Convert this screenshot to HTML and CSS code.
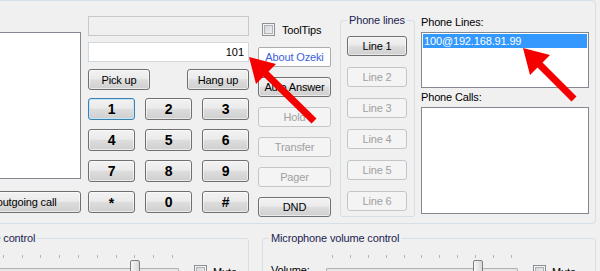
FILE: index.html
```html
<!DOCTYPE html>
<html lang="en">
<head>
    <meta charset="UTF-8">
    <meta name="viewport" content="width=device-width, initial-scale=1.0">
    <title>Ozeki Softphone</title>
    <link rel="stylesheet" href="styles.css">
</head>
<body>
    <div class="window">
        <div class="main-panel">
            <div class="col-log">
                <div class="listbox log-box"></div>
                <button class="btn call-btn">Make outgoing call</button>
            </div>

            <div class="col-dial">
                <input class="textbox" type="text" disabled>
                <input class="textbox number" type="text" value="101">
                <div class="call-row">
                    <button class="btn call-action">Pick up</button>
                    <button class="btn call-action">Hang up</button>
                </div>
                <div class="keypad">
                    <button class="btn key focused">1</button>
                    <button class="btn key">2</button>
                    <button class="btn key">3</button>
                    <button class="btn key">4</button>
                    <button class="btn key">5</button>
                    <button class="btn key">6</button>
                    <button class="btn key">7</button>
                    <button class="btn key">8</button>
                    <button class="btn key">9</button>
                    <button class="btn key star">*</button>
                    <button class="btn key">0</button>
                    <button class="btn key">#</button>
                </div>
            </div>

            <div class="col-actions">
                <label class="check tooltips"><span class="box"></span>ToolTips</label>
                <button class="btn link-btn">About Ozeki</button>
                <button class="btn">Auto Answer</button>
                <button class="btn" disabled>Hold</button>
                <button class="btn" disabled>Transfer</button>
                <button class="btn" disabled>Pager</button>
                <button class="btn">DND</button>
            </div>

            <fieldset class="group lines-group">
                <legend>Phone lines</legend>
                <button class="btn line">Line 1</button>
                <button class="btn line" disabled>Line 2</button>
                <button class="btn line" disabled>Line 3</button>
                <button class="btn line" disabled>Line 4</button>
                <button class="btn line" disabled>Line 5</button>
                <button class="btn line" disabled>Line 6</button>
            </fieldset>

            <div class="col-lists">
                <div class="caption">Phone Lines:</div>
                <div class="listbox lines-box">
                    <div class="item selected">100@192.168.91.99</div>
                </div>
                <div class="caption">Phone Calls:</div>
                <div class="listbox calls-box"></div>
            </div>
        </div>

        <div class="volume-row">
            <fieldset class="group volume-group speaker">
                <legend>Speaker volume control</legend>
                <div class="volume-body">
                    <span class="volume-label">Volume:</span>
                    <div class="slider">
                        <div class="ticks"><i></i><i></i><i></i><i></i><i></i><i></i><i></i><i></i><i></i><i></i><i></i></div>
                        <div class="track"></div>
                        <div class="thumb" style="left: 152px"></div>
                    </div>
                    <label class="check mute"><span class="box"></span>Mute</label>
                </div>
            </fieldset>

            <fieldset class="group volume-group mic">
                <legend>Microphone volume control</legend>
                <div class="volume-body">
                    <span class="volume-label">Volume:</span>
                    <div class="slider">
                        <div class="ticks"><i></i><i></i><i></i><i></i><i></i><i></i><i></i><i></i><i></i><i></i><i></i></div>
                        <div class="track"></div>
                        <div class="thumb" style="left: 147px"></div>
                    </div>
                    <label class="check mute"><span class="box"></span>Mute</label>
                </div>
            </fieldset>
        </div>

        <!-- callout arrows drawn over the screenshot -->
        <svg class="arrows" width="600" height="271" viewBox="0 0 600 271">
            <polygon points="249,57 276,64 268.5,71.5 316.5,118.5 311.5,123.5 263.5,76.5 256,84" />
            <polygon points="523,48 550,55 542.5,62.5 576.5,96.5 571.5,101.5 537.5,67.5 530,75" />
        </svg>
    </div>
</body>
</html>
```

FILE: styles.css
```css
* {
    box-sizing: border-box;
}

html, body {
    margin: 0;
    height: 100%;
    overflow: hidden;
}

body {
    background-color: #f0f0f0;
    font-family: 'Liberation Sans', Arial, sans-serif;
    font-size: 11px;
    letter-spacing: -0.15px;
    color: #000;
}

.window {
    position: relative;
    width: 600px;
    height: 271px;
    overflow: hidden;
}

/* top panel */

.main-panel {
    display: flex;
    align-items: flex-start;
    width: 656px;
    height: 224px;
    margin-left: -60px;
    border: 1px solid #d5dfe5;
    border-radius: 4px;
}

.listbox {
    background-color: #fff;
    border: 1px solid #828790;
}

/* buttons */

.btn {
    display: flex;
    align-items: center;
    justify-content: center;
    height: 20px;
    padding: 0;
    font-family: inherit;
    font-size: 11px;
    letter-spacing: inherit;
    color: #000;
    border: 1px solid #707070;
    border-radius: 3px;
    background: linear-gradient(#f2f2f2, #ebebeb 45%, #dddddd 52%, #cfcfcf);
    box-shadow: inset 0 0 0 1px rgba(255, 255, 255, 0.55);
}

.btn:disabled {
    color: #a0a0a0;
    border-color: #c3c6c8;
    background: #f4f4f4;
    box-shadow: none;
}

.link-btn {
    color: #3d5ee0;
    background: #fff;
    border-color: #acacac;
    border-radius: 2px;
    box-shadow: none;
}

/* left column */

.col-log {
    display: flex;
    flex-direction: column;
    width: 140px;
}

.log-box {
    height: 147px;
    margin-top: 31px;
}

.call-btn {
    align-self: flex-end;
    width: 138px;
    height: 22px;
    margin-top: 12px;
}

/* dial column */

.col-dial {
    display: flex;
    flex-direction: column;
    width: 161px;
    margin-left: 7px;
}

.textbox {
    height: 20px;
    margin: 6px 0 0;
    padding: 0 4px;
    font-family: inherit;
    font-size: 11px;
    color: #000;
    background-color: #fff;
    border: 1px solid #d3d8de;
    border-radius: 0;
    outline: none;
}

.textbox:disabled {
    margin-top: 15px;
    background-color: #f0f0f0;
    border-color: #c8c8c8;
}

.number {
    text-align: right;
}

.call-row {
    display: flex;
    justify-content: space-between;
    margin-top: 7px;
}

.call-action {
    width: 62px;
    height: 21px;
}

.keypad {
    display: grid;
    grid-template-columns: repeat(3, 47px);
    grid-auto-rows: 22px;
    justify-content: space-between;
    row-gap: 9px;
    margin-top: 8px;
}

.key {
    height: 22px;
    font-size: 14px;
    font-weight: bold;
}

.key.star {
    align-items: flex-start;
    padding-top: 3px;
}

.key.focused {
    border-color: #3c7fb1;
    box-shadow: inset 0 0 0 1px #c4e5f6;
}

/* actions column */

.col-actions {
    display: flex;
    flex-direction: column;
    gap: 10px;
    width: 73px;
    margin-left: 9px;
}

.check {
    display: flex;
    align-items: center;
    gap: 6px;
    height: 13px;
    color: #000;
}

.box {
    flex: none;
    width: 13px;
    height: 13px;
    border: 1px solid #8e8f8f;
    background: linear-gradient(135deg, #cdd0d4, #f4f4f4);
    box-shadow: inset 0 0 0 1px #f4f4f4, inset 0 0 0 2px #aeb2b6;
}

.tooltips {
    margin: 22px 0 1px 4px;
    gap: 7px;
}

/* group boxes */

.group {
    margin: 0;
    padding: 9px 6px 0;
    border: 1px solid #d5dfe5;
    border-radius: 3px;
}

.group legend {
    padding: 0 2px;
    line-height: 13px;
    color: #1b2452;
}

.lines-group {
    display: flex;
    flex-direction: column;
    gap: 11px;
    width: 75px;
    height: 203px;
    margin: 13px 0 0 9px;
}

.line {
    width: 60px;
}

/* list column */

.col-lists {
    display: flex;
    flex-direction: column;
    width: 168px;
    margin-left: 6px;
}

.caption {
    line-height: 13px;
    margin-top: 3px;
}

.caption:first-child {
    margin-top: 15px;
}

.lines-box {
    height: 56px;
    margin-top: 3px;
    padding: 1px;
}

.calls-box {
    height: 107px;
    margin-top: 3px;
}

.item {
    height: 14px;
    line-height: 14px;
    padding-left: 1px;
}

.item.selected {
    color: #fff;
    background-color: #3399ff;
}

/* volume controls */

.volume-row {
    display: flex;
    gap: 13px;
    margin: 8px 0 0 -86px;
}

.volume-group {
    height: 60px;
}

.speaker {
    width: 335px;
}

.mic {
    width: 334px;
}

.volume-body {
    display: flex;
    align-items: flex-start;
}

.volume-label {
    width: 55px;
    margin: 10px 0 0 2px;
    line-height: 13px;
}

.slider {
    position: relative;
    height: 24px;
}

.speaker .slider {
    width: 201px;
}

.mic .slider {
    width: 192px;
}

.ticks {
    display: flex;
    justify-content: space-between;
    margin: 1px 6px 0;
}

.ticks i {
    width: 1px;
    height: 3px;
    background-color: #b4b4b4;
}

.track {
    height: 4px;
    margin-top: 10px;
    border: 1px solid #b0b0b0;
    border-radius: 1px;
    background-color: #e7e7e7;
}

.thumb {
    position: absolute;
    top: 6px;
    width: 10px;
    height: 18px;
    border: 1px solid #7f7f7f;
    border-radius: 2px 2px 0 0;
    background: linear-gradient(90deg, #f6f6f6, #d8d8d8);
}

.mute {
    margin: 11px 0 0 15px;
}

/* annotation overlay */

.arrows {
    position: absolute;
    top: 0;
    left: 0;
    pointer-events: none;
}

.arrows polygon {
    fill: #f50000;
}
```
